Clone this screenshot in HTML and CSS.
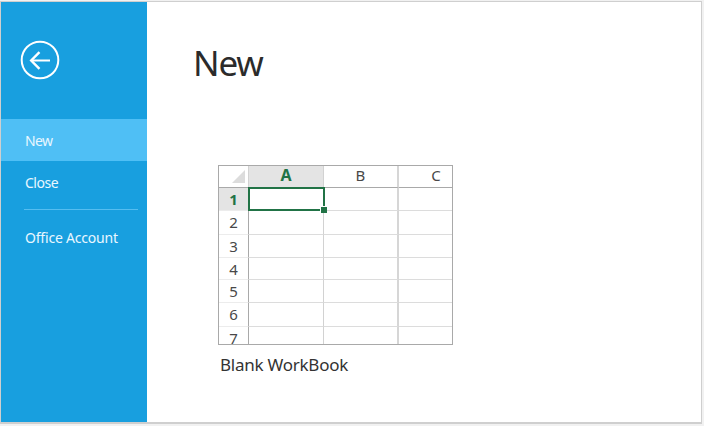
FILE: index.html
```html
<!DOCTYPE html>
<html lang="en">
<head>
<meta charset="utf-8">
<title>New</title>
<link rel="stylesheet" href="styles.css">
</head>
<body>
<div class="window">
  <nav class="sidebar">
    <button class="back" aria-label="Back">
      <svg width="40" height="40" viewBox="0 0 40 40" fill="none" stroke="#fff">
        <circle cx="20" cy="20" r="18.3" stroke-width="2"/>
        <path d="M11.5 20.5H30" stroke-width="2"/>
        <path d="M19.5 12.2L11.2 20.5L19.5 28.8" stroke-width="2.4"/>
      </svg>
    </button>
    <a class="item active"><span class="t-new">New</span></a>
    <a class="item"><span class="t-close">Close</span></a>
    <hr class="rule">
    <a class="item"><span class="t-account">Office Account</span></a>
  </nav>
  <main class="content">
    <h1 class="title">New</h1>
    <div class="template">
      <div class="sheet">
        <div class="cell corner head"><svg width="13" height="13" viewBox="0 0 13 13"><path d="M13 0V13H0Z" fill="#dcdcdc"/></svg></div>
        <div class="cell head selected">A</div><div class="cell head">B</div><div class="cell head last">C</div>
        <div class="cell num selected">1</div><div class="cell cursor"><i class="handle"></i></div><div class="cell"></div><div class="cell last"></div>
        <div class="cell num">2</div><div class="cell"></div><div class="cell"></div><div class="cell last"></div>
        <div class="cell num">3</div><div class="cell"></div><div class="cell"></div><div class="cell last"></div>
        <div class="cell num">4</div><div class="cell"></div><div class="cell"></div><div class="cell last"></div>
        <div class="cell num">5</div><div class="cell"></div><div class="cell"></div><div class="cell last"></div>
        <div class="cell num">6</div><div class="cell"></div><div class="cell"></div><div class="cell last"></div>
        <div class="cell num">7</div><div class="cell"></div><div class="cell"></div><div class="cell last"></div>
      </div>
      <div class="caption">Blank WorkBook</div>
    </div>
  </main>
</div>
</body>
</html>
```
FILE: styles.css
```css
* { box-sizing: border-box; }
body {
  margin: 0;
  padding: 1px 2px 2px 0;
  width: 704px;
  height: 426px;
  overflow: hidden;
  background: #f1f1f1;
  font-family: "Noto Sans", "Open Sans", sans-serif;
}
.window {
  display: flex;
  width: 702px;
  height: 423px;
  border: 1px solid #cfcfcf;
  border-bottom-width: 2px;
  background: #fff;
}
.sidebar {
  width: 146px;
  background: #189fdf;
  color: #e9f7ff;
}
.back {
  display: block;
  width: 40px;
  height: 40px;
  margin: 38px 0 39px 19px;
  padding: 0;
  border: 0;
  background: none;
}
.back svg { display: block; }
.item {
  display: flex;
  align-items: center;
  height: 42px;
  padding: 2px 0 0 24px;
  font-size: 14px;
  line-height: 18px;
  white-space: nowrap;
}
.active { background: #4fbff5; }
.t-new { letter-spacing: -0.6px; }
.t-close { letter-spacing: -0.5px; }
.t-account { letter-spacing: -0.2px; }
.rule {
  width: 114px;
  height: 1px;
  margin: 6px 0 6px 23px;
  border: 0;
  background: #55bdf0;
}
.content {
  flex: 1;
  padding: 37px 0 0 46px;
}
.title {
  margin: 0;
  color: #2b2b2b;
  font-size: 35px;
  font-weight: 400;
  line-height: 48px;
  letter-spacing: -1.2px;
}
.template {
  width: 235px;
  margin: 78px 0 0 25px;
}
.sheet {
  display: grid;
  grid-template-columns: 30px 75px 75px 53px;
  grid-template-rows: 22px 23px 24px 23px 22px 23px 24px 17px;
  width: 235px;
  height: 180px;
  border: 1px solid #a9a9a9;
  overflow: hidden;
  color: #484848;
  font-size: 15px;
  line-height: 22px;
  text-align: center;
}
.cell {
  min-width: 0;
  min-height: 0;
  border-right: 1px solid #d2d2d2;
  border-bottom: 1px solid #dcdcdc;
}
.cell:nth-child(4n + 3) { border-right: 2px solid #d6d6d6; }
.head { border-bottom-color: #a9a9a9; line-height: 19px; }
.last { border-right: 0; }
.head.last { padding-left: 21px; }
.num { border-right-color: #a9a9a9; border-bottom-color: #ececec; }
.corner {
  display: flex;
  align-items: flex-end;
  justify-content: flex-end;
  padding: 0 3px 4px 0;
}
.selected {
  background: #e4e4e4;
  color: #217346;
  font-weight: 700;
}
.head.selected { font-size: 16px; }
.cell:nth-last-child(-n + 4) { border-bottom: 0; }
.cursor {
  position: relative;
  margin: -1px -1px 0;
  border: 2px solid #217346;
}
.handle {
  position: absolute;
  right: -4px;
  bottom: -4px;
  width: 7px;
  height: 7px;
  border: 1px solid #fff;
  border-width: 1px 0 0 1px;
  background: #217346;
}
.caption {
  margin: 8px 0 0 2px;
  color: #333;
  font-size: 17px;
  line-height: 24px;
  letter-spacing: -0.25px;
  white-space: nowrap;
}
```
